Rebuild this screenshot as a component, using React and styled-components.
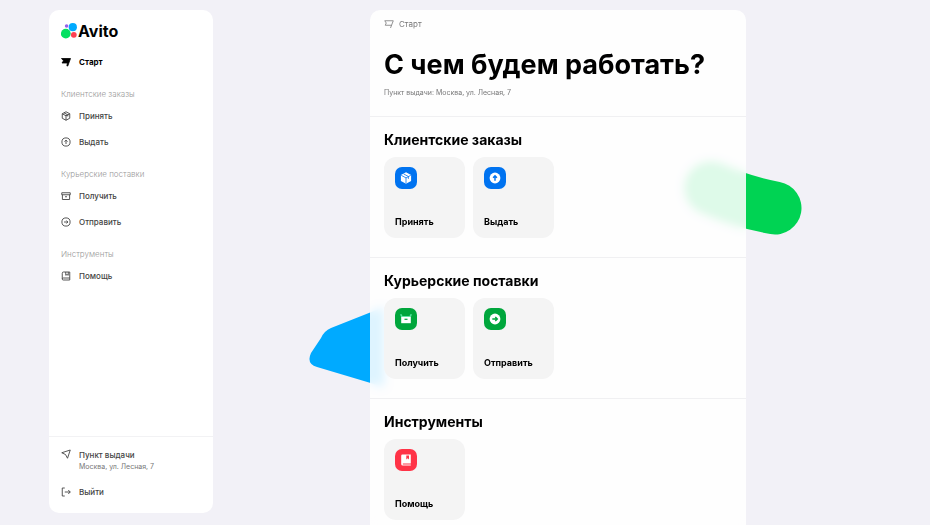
import React from 'react';
import styled, { createGlobalStyle } from 'styled-components';

// Outline icons for the menu.
const FlagIcon = ({ filled }) => (
    <svg viewBox="0 0 20 20" aria-hidden="true">
        <path
            d={filled ? 'M1 3H19L13.500 18H11.800L12.800 12H2L5 7.500z' : 'M13 18 18.500 3.500H1.500L4.500 8 2.500 12.500H15'}
            fill={filled ? 'currentColor' : 'none'}
            stroke="currentColor"
            strokeWidth="1.6"
            strokeLinejoin="round"
        />
    </svg>
);

const BoxIcon = () => (
    <Outline viewBox="0 0 20 20" aria-hidden="true">
        <path d="M10 1.500 17.500 5.500v9L10 18.500 2.500 14.500v-9z" />
        <path d="M2.500 5.500 10 9.500l7.500-4M10 9.500v9M6 3.600l7.600 4.100v3.200" />
    </Outline>
);

const UpIcon = () => (
    <Outline viewBox="0 0 20 20" aria-hidden="true">
        <circle cx="10" cy="10" r="8.200" />
        <path d="M10 14V6.500M7 9.200l3-3 3 3" />
    </Outline>
);

const ArchiveIcon = () => (
    <Outline viewBox="0 0 20 20" aria-hidden="true">
        <path d="M1.500 3.500h17v4h-17zM2.800 7.500v9.500h14.400V7.500M8 11.500h4" />
    </Outline>
);

const RightIcon = () => (
    <Outline viewBox="0 0 20 20" aria-hidden="true">
        <circle cx="10" cy="10" r="8.200" />
        <path d="M6 10h7.500M10.800 7l3 3-3 3" />
    </Outline>
);

const BookIcon = () => (
    <Outline viewBox="0 0 20 20" aria-hidden="true">
        <path d="M5 2h12.500v16H4.500A2 2 0 0 1 2.500 16V4.500A2.500 2.500 0 0 1 5 2zM2.500 15.500a2 2 0 0 1 2-1.500h13M9.500 2v6.500L12 7l2.500 1.500V2" />
    </Outline>
);

const PlaceIcon = () => (
    <Outline viewBox="0 0 20 20" aria-hidden="true">
        <path d="M1.500 7.500 18.500 2l-5.500 16.500-4-7.500z" />
    </Outline>
);

const ExitIcon = () => (
    <Outline viewBox="0 0 20 20" aria-hidden="true">
        <path d="M7.500 2H2.500v16h5M7.500 10h11M14.500 6l4 4-4 4" />
    </Outline>
);

// Solid icons for the tiles.
const BoxSolid = () => (
    <svg viewBox="0 0 20 20" aria-hidden="true">
        <path d="M10 0.500 18.500 5v10L10 19.500 1.500 15V5z" fill="#fff" />
        <path d="M2 5.500 10 9.800l8-4.300M10 9.800V19M6 3.200l8 4.300v4" fill="none" stroke="#0073f0" strokeWidth="1.300" />
    </svg>
);

const UpSolid = () => (
    <svg viewBox="0 0 20 20" aria-hidden="true">
        <circle cx="10" cy="10" r="9" fill="#fff" />
        <path d="M10 14.500V7M6.800 9.500 10 6.200l3.200 3.300" fill="none" stroke="#0073f0" strokeWidth="2.400" />
    </svg>
);

const ArchiveSolid = () => (
    <svg viewBox="0 0 20 20" aria-hidden="true">
        <path d="M0 2h3l1 3h12l1-3h3l-2 5H2z" fill="#4fe39a" />
        <path d="M2 6.500h16V17H2z" fill="#fff" />
        <path d="M7.500 10.500h5" stroke="#00a63c" strokeWidth="2" />
    </svg>
);

const RightSolid = () => (
    <svg viewBox="0 0 20 20" aria-hidden="true">
        <circle cx="10" cy="10" r="9" fill="#fff" />
        <path d="M5.500 10H13M10.500 6.800 13.800 10l-3.300 3.200" fill="none" stroke="#00a63c" strokeWidth="2.400" />
    </svg>
);

const BookSolid = () => (
    <svg viewBox="0 0 20 20" aria-hidden="true">
        <path d="M4 1h14v15H5a1 1 0 0 0 0 1.600h13V19H4.500A2.500 2.500 0 0 1 2 16.500V3a2 2 0 0 1 2-2z" fill="#fff" />
        <path d="M10.500 2.500h4.500v6.500l-2.200-1.800L10.500 9z" fill="#ff3347" />
    </svg>
);

const menu = [
    { title: 'Клиентские заказы', items: [['Принять', BoxIcon], ['Выдать', UpIcon]] },
    { title: 'Курьерские поставки', items: [['Получить', ArchiveIcon], ['Отправить', RightIcon]] },
    { title: 'Инструменты', items: [['Помощь', BookIcon]] },
];

const sections = [
    { title: 'Клиентские заказы', color: '#0073f0', items: [['Принять', BoxSolid], ['Выдать', UpSolid]] },
    { title: 'Курьерские поставки', color: '#00a63c', items: [['Получить', ArchiveSolid], ['Отправить', RightSolid]] },
    { title: 'Инструменты', color: '#ff3347', items: [['Помощь', BookSolid]] },
];

const App = () => (
    <Page>
        <GlobalStyle />

        <Sidebar>
            <Logo href="#">
                <svg viewBox="0 0 17 16" aria-hidden="true">
                    <circle cx="4.800" cy="10.600" r="4.900" fill="#04e061" />
                    <circle cx="11.800" cy="4.200" r="4.100" fill="#00aaff" />
                    <circle cx="12.800" cy="11.800" r="2.900" fill="#ff4053" />
                    <circle cx="5.600" cy="3" r="1.800" fill="#965eeb" />
                </svg>
                Avito
            </Logo>

            <nav>
                <MenuLink href="#" $active>
                    <FlagIcon filled />
                    Старт
                </MenuLink>
                {menu.map(({ title, items }) => (
                    <div key={title}>
                        <MenuTitle>{title}</MenuTitle>
                        {items.map(([name, Icon]) => (
                            <MenuLink href="#" key={name}>
                                <Icon />
                                {name}
                            </MenuLink>
                        ))}
                    </div>
                ))}
            </nav>

            <SidebarFooter>
                <Place href="#">
                    <PlaceIcon />
                    <span>
                        Пункт выдачи
                        <Address>Москва, ул. Лесная, 7</Address>
                    </span>
                </Place>
                <ExitButton type="button">
                    <ExitIcon />
                    Выйти
                </ExitButton>
            </SidebarFooter>
        </Sidebar>

        <Content>
            <BlueShape viewBox="0 0 75 80" aria-hidden="true">
                <path d="M75 0 22 21Q15 24 12 31L2 46Q-3 57 8 60L75 80z" fill="#00aaff" />
            </BlueShape>
            <GreenShape viewBox="0 0 118 76" aria-hidden="true">
                <path d="M27 28Q58 42 91 48" fill="none" stroke="#00d353" strokeWidth="53" strokeLinecap="round" />
            </GreenShape>

            <Panel>
                <Header>
                    <Crumb href="#">
                        <FlagIcon />
                        Старт
                    </Crumb>
                    <Title>С чем будем работать?</Title>
                    <Subtitle>Пункт выдачи: Москва, ул. Лесная, 7</Subtitle>
                </Header>
                {sections.map(({ title, color, items }) => (
                    <Section key={title}>
                        <SectionTitle>{title}</SectionTitle>
                        <Tiles>
                            {items.map(([name, Icon]) => (
                                <Tile type="button" key={name}>
                                    <TileIcon $color={color}>
                                        <Icon />
                                    </TileIcon>
                                    {name}
                                </Tile>
                            ))}
                        </Tiles>
                    </Section>
                ))}
            </Panel>
        </Content>
    </Page>
);

const GlobalStyle = createGlobalStyle`
    * {
        box-sizing: border-box;
    }

    body {
        margin: 0;
        background: #f2f1f7;
        color: #000;
        font-family: Inter, 'Open Sans', sans-serif;
    }

    a {
        color: inherit;
        text-decoration: none;
    }

    button {
        border: none;
        padding: 0;
        font-family: inherit;
        cursor: pointer;
    }
`;

// Page.
const Page = styled.div`
    display: grid;
    grid-template-columns: 49fr 164fr 157fr 376fr 184fr;
    grid-template-rows: minmax(0, 1fr);
    height: 100vh;
    padding-top: 10px;
    overflow: hidden;
`;

const Outline = styled.svg`
    fill: none;
    stroke: currentColor;
    stroke-width: 1.8;
    stroke-linejoin: round;
`;

// Sidebar.
const Sidebar = styled.aside`
    grid-column: 2;
    display: flex;
    flex-direction: column;
    margin-bottom: 12px;
    padding-top: 12px;
    border-radius: 10px;
    background: #fff;

    nav {
        flex: 1;
    }
`;

const Logo = styled.a`
    display: flex;
    align-items: center;
    height: 18px;
    margin: 0 12px 9px;
    font-size: 16px;
    font-weight: 700;

    svg {
        width: 17px;
        height: 16px;
    }
`;

const MenuLink = styled.a`
    display: flex;
    align-items: center;
    gap: 8px;
    height: 26px;
    padding: 0 12px;
    color: ${({ $active }) => ($active ? '#000' : '#444')};
    font-size: 8px;
    font-weight: ${({ $active }) => ($active ? 700 : 500)};

    svg {
        width: 10px;
        height: 10px;
    }
`;

const MenuTitle = styled.div`
    margin: 13px 12px 3px;
    color: #999;
    font-size: 8px;
    font-weight: 300;
    line-height: 12px;
`;

const SidebarFooter = styled.div`
    padding: 12px 12px 8px;
    border-top: 1px solid #f2f2f4;
    color: #444;
    font-size: 8px;
    font-weight: 500;
    line-height: 12px;

    svg {
        flex: none;
        width: 10px;
        height: 10px;
    }
`;

const Place = styled.a`
    display: flex;
    gap: 8px;
    margin-bottom: 6px;
`;

const Address = styled.small`
    display: block;
    color: #777;
    font-size: 7px;
    font-weight: 400;
`;

const ExitButton = styled.button`
    display: flex;
    align-items: center;
    gap: 8px;
    height: 26px;
    background: none;
    color: inherit;
    font-size: inherit;
    font-weight: inherit;
`;

// Content.
const Content = styled.main`
    grid-column: 4;
    position: relative;
`;

const BlueShape = styled.svg`
    position: absolute;
    top: 297px;
    left: -61px;
    width: 75px;
    height: 80px;
`;

const GreenShape = styled.svg`
    position: absolute;
    top: 150px;
    right: -56px;
    width: 118px;
    height: 76px;
`;

const Panel = styled.div`
    position: relative;
    border-radius: 10px 10px 0 0;
    background: rgba(255, 255, 255, 0.87);
    backdrop-filter: blur(5px);
`;

const Header = styled.header`
    padding: 8px 14px 18px;
`;

const Crumb = styled.a`
    display: flex;
    align-items: center;
    gap: 5px;
    color: #777;
    font-size: 8px;
    line-height: 12px;

    svg {
        width: 10px;
        height: 10px;
    }
`;

const Title = styled.h1`
    margin: 17px 0 5px;
    font-size: 27px;
    font-weight: 700;
    line-height: 36px;
    white-space: nowrap;
`;

const Subtitle = styled.p`
    margin: 0;
    color: #777;
    font-size: 7px;
    line-height: 10px;
`;

const Section = styled.section`
    padding: 13px 14px 19px;
    border-top: 1px solid #f0f0f2;
`;

const SectionTitle = styled.h2`
    margin: 0 0 7px;
    font-size: 14px;
    font-weight: 700;
    line-height: 20px;
`;

const Tiles = styled.div`
    display: flex;
    gap: 8px;
`;

const Tile = styled.button`
    display: flex;
    flex-direction: column;
    align-items: flex-start;
    justify-content: space-between;
    width: 81px;
    height: 81px;
    padding: 10px 11px;
    border-radius: 12px;
    background: #f4f4f4;
    color: #000;
    font-size: 9px;
    font-weight: 700;
    line-height: 12px;
`;

const TileIcon = styled.span`
    display: grid;
    place-items: center;
    width: 22px;
    height: 22px;
    border-radius: 7px;
    background: ${({ $color }) => $color};

    svg {
        width: 12px;
        height: 12px;
    }
`;

export default App;
